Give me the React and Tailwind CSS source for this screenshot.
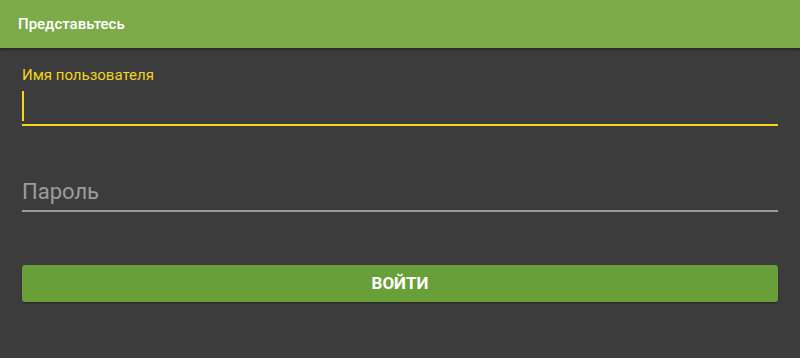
import React from "react";

const App = () => {
  return (
    <div className="min-h-[358px] w-[800px] bg-[#3c3c3c] font-['Roboto',sans-serif]">
      <div className="h-[48px] bg-[#7dab4a] flex items-center px-[18px] shadow-[0_2px_3px_rgba(0,0,0,0.35)]">
        <h1 className="text-white text-[15px] font-medium">Представьтесь</h1>
      </div>

      <div className="px-[22px]">
        <div className="pt-[18px]">
          <label className="block text-[15px] leading-[18px] text-[#f2d51c]">
            Имя пользователя
          </label>
          <div className="h-[42px] flex items-end pb-[3px] border-b-2 border-[#f2d51c]">
            <div className="w-[2px] h-[30px] bg-[#f2d51c]"></div>
          </div>
        </div>

        <div className="pt-[45px]">
          <div className="h-[41px] flex items-end pb-[5px] text-[22px] leading-[26px] text-[#9c9c9c] border-b-2 border-[#9a9a9a]">
            Пароль
          </div>
        </div>

        <button className="mt-[53px] w-full h-[37px] rounded-[3px] bg-[#689f38] text-white text-[17px] font-bold shadow-[0_1px_2px_rgba(0,0,0,0.4)]">
          ВОЙТИ
        </button>
      </div>
    </div>
  );
};

export default App;
